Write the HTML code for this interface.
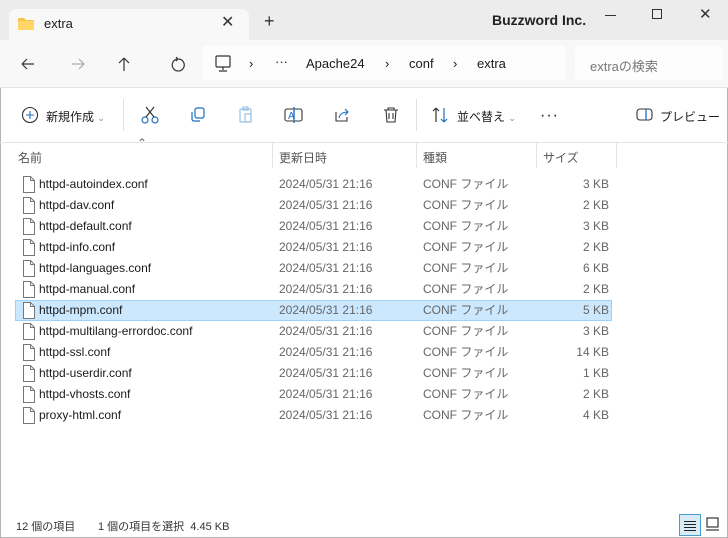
<!DOCTYPE html>
<html><head><meta charset="utf-8"><style>
*{margin:0;padding:0;box-sizing:border-box}
body{width:728px;height:538px;overflow:hidden;background:#fff;font-family:"Segoe UI","Liberation Sans","Noto Sans CJK JP",sans-serif;color:#1a1a1a;position:relative;font-size:12px}
.win{position:absolute;left:0;top:0;width:728px;height:538px;border:1px solid #b5b5b5}
.abs{position:absolute}
.title{left:0;top:0;width:728px;height:40px;background:#ececec}
.tab{left:9px;top:9px;width:240px;height:32px;background:#f8f8f8;border-radius:7px 7px 0 0}
.nav{left:0;top:40px;width:728px;height:48px;background:#f8f8f8;border-bottom:1px solid #e3e3e3}
.crumb{left:202px;top:46px;width:364px;height:34px;background:#fdfdfd;border-radius:4px}
.search{left:575px;top:46px;width:148px;height:34px;background:#fdfdfd;border-radius:4px}
.t{position:absolute;white-space:nowrap}
.hdr{color:#555;font-size:12px}
.row{position:absolute;left:15px;width:597px;height:21px}
.sel{background:#cce8ff;box-shadow:inset 0 0 0 1px #99d1ff}
.fi{position:absolute;left:7px;top:2px}
.nm{position:absolute;left:24px;top:3px;font-size:12px;color:#1a1a1a}
.dt{position:absolute;left:264px;top:3px;color:#666;font-size:12px}
.ty{position:absolute;left:408px;top:2px;color:#666;font-size:12px;line-height:16px}
.sz{position:absolute;right:3px;top:3px;color:#666;font-size:12px}
</style></head><body>
<div class="win"></div>
<div class="abs title"></div>
<div class="abs tab"></div>
<svg class="abs" style="left:17px;top:16px" width="18" height="15"><path d="M1 3 a1 1 0 0 1 1-1 h5 l2 2 h7 a1 1 0 0 1 1 1 v8 a1 1 0 0 1-1 1 h-14 a1 1 0 0 1-1-1z" fill="#f4c54a"/><rect x="1" y="5" width="16" height="9" rx="1" fill="#ffd767"/></svg>
<div class="t" style="left:44px;top:16px;font-size:13px">extra</div>
<div class="t" style="left:221px;top:12px;font-size:16px;color:#333">✕</div>
<div class="t" style="left:264px;top:11px;font-size:18px;color:#333">+</div>
<div class="t" style="left:492px;top:12px;font-size:14px;font-weight:bold;color:#222">Buzzword Inc.</div>
<div class="abs" style="left:605px;top:15px;width:11px;height:1px;background:#333"></div>
<div class="abs" style="left:652px;top:9px;width:10px;height:10px;border:1px solid #333"></div>
<div class="t" style="left:699px;top:5px;font-size:15px;color:#333">✕</div>
<div class="abs nav"></div>
<div class="abs crumb"></div>
<div class="abs search"></div>
<svg class="abs" style="left:18px;top:55px" width="200" height="18" fill="none" stroke="#333" stroke-width="1.2">
<path d="M4 9h12M4 9l5-5M4 9l5 5"/>
<path d="M54 9h12M66 9l-5-5M66 9l-5 5" stroke="#aaa"/>
<path d="M106 3v13M106 3l-5 5M106 3l5 5"/>
<path d="M160 4a6 6 0 1 0 0.5 0M160 4l-2-2M160 4l-2 2"/>
</svg>
<svg class="abs" style="left:214px;top:55px" width="20" height="18" fill="none" stroke="#333" stroke-width="1.2"><rect x="2" y="1" width="14" height="11" rx="1"/><path d="M9 12v3M5 16h8"/></svg>
<div class="t" style="left:249px;top:56px;font-size:13px">›</div>
<div class="t" style="left:275px;top:54px;font-size:13px">···</div>
<div class="t" style="left:306px;top:56px;font-size:13px">Apache24</div>
<div class="t" style="left:385px;top:56px;font-size:13px">›</div>
<div class="t" style="left:409px;top:56px;font-size:13px">conf</div>
<div class="t" style="left:453px;top:56px;font-size:13px">›</div>
<div class="t" style="left:477px;top:56px;font-size:13px">extra</div>
<div class="t" style="left:590px;top:56px;font-size:13px;color:#777">extraの検索</div>
<svg class="abs" style="left:21px;top:106px" width="18" height="18" fill="none" stroke="#333" stroke-width="1.1"><circle cx="9" cy="9" r="7.5"/><path d="M9 5v8M5 9h8" stroke="#1a6fc0"/></svg>
<div class="t" style="left:46px;top:108px;font-size:12px">新規作成 <span style="color:#888;font-size:9px">⌄</span></div>
<div class="abs" style="left:123px;top:99px;width:1px;height:32px;background:#e0e0e0"></div>
<svg class="abs" style="left:140px;top:105px" width="20" height="20" fill="none" stroke="#1a6fc0" stroke-width="1.2"><circle cx="5" cy="15" r="3"/><circle cx="15" cy="15" r="3"/><path d="M6 12L14 2M14 12L6 2" stroke="#333"/></svg>
<svg class="abs" style="left:189px;top:106px" width="18" height="18" fill="none" stroke="#1a6fc0" stroke-width="1.2"><rect x="6" y="2" width="9" height="10" rx="2"/><path d="M3 6v7a2 2 0 0 0 2 2h6"/></svg>
<svg class="abs" style="left:237px;top:106px" width="18" height="18" fill="none" stroke="#9bc2e4" stroke-width="1.2"><rect x="3" y="3" width="11" height="13" rx="1"/><rect x="6" y="1" width="5" height="3"/><rect x="8" y="8" width="6" height="8"/></svg>
<svg class="abs" style="left:284px;top:105px" width="20" height="20" fill="none" stroke="#333" stroke-width="1.1"><rect x="1" y="4" width="17" height="12" rx="2"/><path d="M10 2v16" stroke="#1a6fc0" stroke-width="1.4"/><text x="4" y="14" font-size="10" fill="#1a6fc0" stroke="none" font-family="Liberation Sans">A</text></svg>
<svg class="abs" style="left:333px;top:106px" width="18" height="18" fill="none" stroke="#333" stroke-width="1.1"><path d="M3 6v9h11v-4"/><path d="M6 12c1-5 5-6 9-6M12 3l3 3-3 3" stroke="#1a6fc0"/></svg>
<svg class="abs" style="left:382px;top:106px" width="18" height="18" fill="none" stroke="#333" stroke-width="1.1"><path d="M2 4h14M6 4V2h6v2M4 4l1 12h8l1-12M7 7v6M11 7v6"/></svg>
<div class="abs" style="left:416px;top:99px;width:1px;height:32px;background:#e0e0e0"></div>
<svg class="abs" style="left:431px;top:106px" width="20" height="18" fill="none" stroke-width="1.2"><path d="M5 16V2M5 2L2 5M5 2l3 3" stroke="#333"/><path d="M13 2v14M13 16l-3-3M13 16l3-3" stroke="#1a6fc0"/></svg>
<div class="t" style="left:457px;top:108px;font-size:12px">並べ替え <span style="color:#888;font-size:9px">⌄</span></div>
<div class="t" style="left:540px;top:107px;font-size:16px;letter-spacing:1px">···</div>
<svg class="abs" style="left:636px;top:107px" width="18" height="16" fill="none" stroke="#333" stroke-width="1.1"><rect x="1" y="2" width="15" height="11" rx="3"/><path d="M10 2v11" stroke="#1a6fc0" stroke-width="1.3"/></svg>
<div class="t" style="left:660px;top:108px;font-size:12px">プレビュー</div>
<div class="abs" style="left:0;top:142px;width:728px;height:1px;background:#e3e3e3"></div>
<div class="t" style="left:137px;top:136px;font-size:12px;color:#666">⌃</div>
<div class="t hdr" style="left:18px;top:149px">名前</div>
<div class="abs" style="left:272px;top:143px;width:1px;height:25px;background:#e5e5e5"></div>
<div class="t hdr" style="left:279px;top:149px">更新日時</div>
<div class="abs" style="left:416px;top:143px;width:1px;height:25px;background:#e5e5e5"></div>
<div class="t hdr" style="left:423px;top:149px">種類</div>
<div class="abs" style="left:536px;top:143px;width:1px;height:25px;background:#e5e5e5"></div>
<div class="t hdr" style="left:543px;top:149px">サイズ</div>
<div class="abs" style="left:616px;top:143px;width:1px;height:25px;background:#e5e5e5"></div>
<div id="rows"></div>
<script>
var f=[["httpd-autoindex.conf",3],["httpd-dav.conf",2],["httpd-default.conf",3],["httpd-info.conf",2],["httpd-languages.conf",6],["httpd-manual.conf",2],["httpd-mpm.conf",5],["httpd-multilang-errordoc.conf",3],["httpd-ssl.conf",14],["httpd-userdir.conf",1],["httpd-vhosts.conf",2],["proxy-html.conf",4]];
var h="";f.forEach(function(r,i){h+='<div class="row'+(i==6?' sel':'')+'" style="top:'+(174+i*21)+'px"><svg class="fi" width="13" height="17" fill="#fff" stroke="#777" stroke-width="1"><path d="M1.5 .5h7l4 4v12h-11z"/><path d="M8.5 .5v4h4" fill="none"/></svg><span class="nm">'+r[0]+'</span><span class="dt">2024/05/31 21:16</span><span class="ty">CONF ファイル</span><span class="sz">'+r[1]+' KB</span></div>'});
document.getElementById("rows").innerHTML=h;
</script>
<div class="t" style="left:16px;top:518px;font-size:11px;color:#333">12 個の項目</div>
<div class="t" style="left:98px;top:518px;font-size:11px;color:#333">1 個の項目を選択&nbsp; 4.45 KB</div>
<div class="abs" style="left:679px;top:514px;width:22px;height:22px;background:#d9ebf7;border:1px solid #4a9ccc"></div>
<svg class="abs" style="left:683px;top:518px" width="14" height="14" stroke="#222" stroke-width="1"><path d="M1 3.5h12M1 6.5h12M1 9.5h12M1 12.5h12"/></svg>
<svg class="abs" style="left:705px;top:516px" width="16" height="16" fill="none" stroke="#222" stroke-width="1.1"><rect x="2" y="2" width="11" height="9"/><path d="M1 14h13"/></svg>
</body></html>
